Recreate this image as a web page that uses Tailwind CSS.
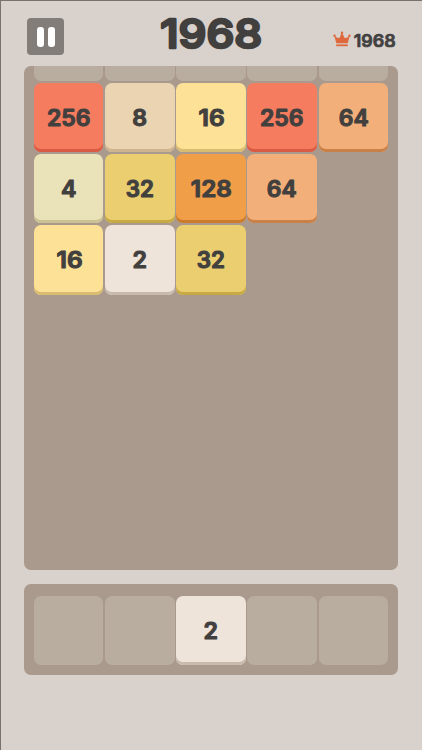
<!DOCTYPE html>
<html lang="en"><head><meta charset="utf-8"><title>Merge blocks</title>
<script src="https://cdn.jsdelivr.net/npm/@tailwindcss/browser@4"></script></head>
<body class="w-[422px] h-[750px] overflow-hidden bg-[#d8d1cc] font-['Inter',sans-serif] text-[#42403e] border-t-1 border-l-1 border-[#777170]">
<header class="h-[65px] pl-[26px] pr-[26px] grid grid-cols-[37px_1fr_63px] items-start">
  <button aria-label="Pause" class="mt-[17px] size-[37px] rounded-[4px] bg-[#837d79] flex items-center justify-center gap-[4px]"><span class="w-[7px] h-[20px] rounded-[3px] bg-white"></span><span class="w-[7px] h-[20px] rounded-[3px] bg-white"></span></button>
  <svg class="ml-[77px] w-[140px] h-[64px] fill-current stroke-current" viewBox="0 0 140 64" stroke-width="2.6" stroke-linejoin="round"><text x="70.2" y="47" text-anchor="middle" font-size="39.5" font-weight="500" textLength="102" lengthAdjust="spacingAndGlyphs">1968</text></svg>
  <div class="flex mt-[29px]">
    <svg class="shrink-0 w-[18px] h-[18px] mt-[1px]" viewBox="0 0 18 18" fill="#df693d"><path d="M3.3 12.3 1.1 4.3Q4 8 6.6 6.7L9 1.2 11.4 6.7Q14 8 16.9 4.3L14.7 12.3Z"/><path d="M3.2 13.4H14.8V15.2H3.2Z"/><circle cx="1.5" cy="4.8" r="1.2"/><circle cx="9" cy="1.8" r="1.2"/><circle cx="16.5" cy="4.8" r="1.2"/></svg>
    <svg class="shrink-0 w-[44px] h-[22px] ml-[1px] fill-current stroke-current" viewBox="0 0 44 22" stroke-width=".7" stroke-linejoin="round"><text x="22.7" y="17" text-anchor="middle" font-size="17" font-weight="600" textLength="42" lengthAdjust="spacingAndGlyphs">1968</text></svg>
  </div>
</header>
<main class="ml-[23px] w-[374px]">
  <section id="board" class="h-[504px] rounded-[7px] bg-[#a99a8d] px-[9.8px] overflow-hidden">
    <div id="stubs" class="grid grid-cols-5 gap-x-[1.7px] h-[15px] mb-[1.5px]"></div>
    <div id="tiles" class="grid grid-cols-5 gap-x-[1.7px] gap-y-[1.7px]"></div>
  </section>
  <section id="tray" class="mt-[14px] h-[91px] rounded-[7px] bg-[#a99a8d] px-[9.8px] pt-[11.7px] grid grid-cols-5 gap-x-[1.7px] items-start"></section>
</main>
<script>
const tones = {
  2: 'bg-[#eee4da] shadow-[inset_0_-3px_0_#c8bbae]',
  4: 'bg-[#eae2b9] shadow-[inset_0_-3px_0_#cbc294]',
  8: 'bg-[#ebd4b1] shadow-[inset_0_-3px_0_#cdb38e]',
  16: 'bg-[#fde196] shadow-[inset_0_-3px_0_#d9bc70]',
  32: 'bg-[#ebce70] shadow-[inset_0_-3px_0_#c8aa45]',
  64: 'bg-[#f2af7a] shadow-[inset_0_-3px_0_#ca8147]',
  128: 'bg-[#f09f48] shadow-[inset_0_-3px_0_#ca7c2c]',
  256: 'bg-[#f67c60] shadow-[inset_0_-3px_0_#d95b43]'
};
const widths = {2: 14.5, 4: 15.5, 8: 14.8, 16: 26.2, 32: 28.2, 64: 30, 128: 41, 256: 43.7};
const tile = (n, dx = 0, dy = 0) => `<div class="h-[69.6px] rounded-[7px] ${tones[n]}"><svg class="w-full h-full fill-current stroke-current" viewBox="0 0 69.6 69.6" stroke-width="1.1" stroke-linejoin="round"><text x="${34.8 + dx}" y="${43.2 + dy}" text-anchor="middle" font-size="22.4" font-weight="600" textLength="${widths[n]}" lengthAdjust="spacingAndGlyphs">${n}</text></svg></div>`;
document.getElementById('stubs').innerHTML = '<div class="bg-[#b9ada0] rounded-b-[7px]"></div>'.repeat(5);
document.getElementById('tiles').innerHTML =
  [[256],[8],[16,.8],[256],[64],[4],[32],[128,.6],[64],null,[16,.8],[2],[32]].map(a => a ? tile(...a) : '<div></div>').join('');
const empty = '<div class="h-[69.6px] bg-[#b9ada0] rounded-[7px]"></div>';
document.getElementById('tray').innerHTML = empty + empty + tile(2) + empty + empty;
</script>
</body></html>
